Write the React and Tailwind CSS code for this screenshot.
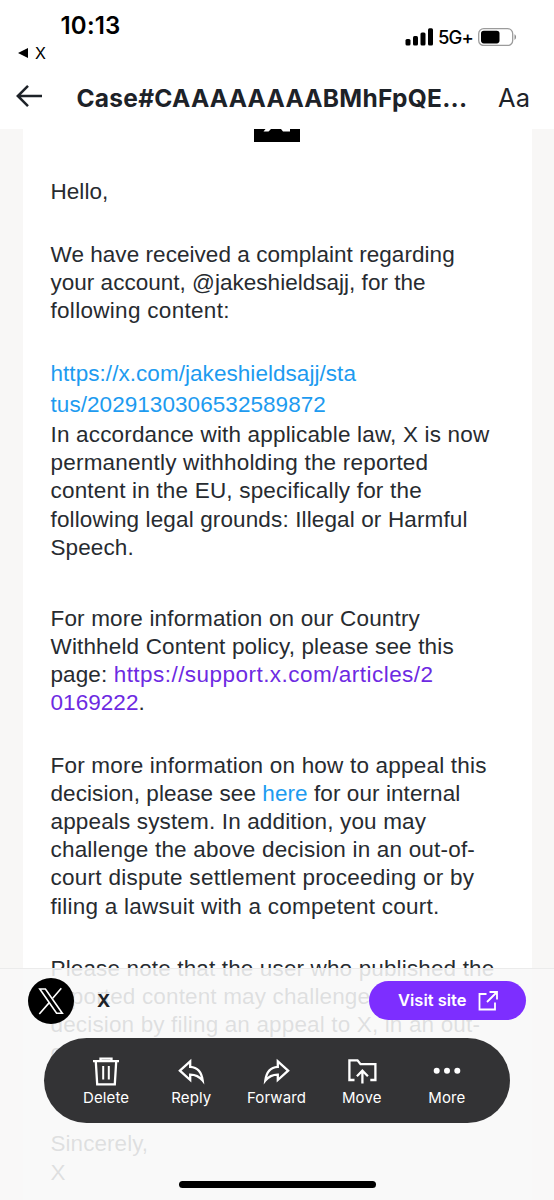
import { clsx } from 'clsx';

const PARAGRAPHS = [
  {
    gap: 'mt-[36px]',
    lines: [{ text: 'Hello,', track: 'tracking-[0.05px]' }],
  },
  {
    gap: 'mt-[34.6px]',
    lines: [
      { text: 'We have received a complaint regarding', track: 'tracking-[0.05px]' },
      { text: 'your account, @jakeshieldsajj, for the', track: 'tracking-[0.02px]' },
      { text: 'following content:', track: 'tracking-[0.3px]' },
    ],
  },
  {
    gap: 'mt-[34px]',
    style: 'leading-[30.5px] text-[#1d9bf0]',
    lines: [
      { text: 'https://x.com/jakeshieldsajj/sta', track: 'tracking-[0.05px]' },
      { text: 'tus/2029130306532589872', track: 'tracking-[0.06px]' },
    ],
  },
  {
    gap: 'mt-[0.6px]',
    lines: [
      { text: 'In accordance with applicable law, X is now', track: 'tracking-[0.17px]' },
      { text: 'permanently withholding the reported', track: 'tracking-[0.21px]' },
      { text: 'content in the EU, specifically for the', track: 'tracking-[0.19px]' },
      { text: 'following legal grounds: Illegal or Harmful', track: 'tracking-[0.13px]' },
      { text: 'Speech.', track: 'tracking-[0.1px]' },
    ],
  },
  {
    gap: 'mt-[42.8px]',
    lines: [
      { text: 'For more information on our Country', track: 'tracking-[0.16px]' },
      { text: 'Withheld Content policy, please see this', track: 'tracking-[0.15px]' },
      {
        text: (
          <>
            page: <a className="tracking-[0.46px] text-[#6d2ae2]">https://support.x.com/articles/2</a>
          </>
        ),
        track: 'tracking-[0.1px]',
      },
      {
        text: (
          <>
            <a className="text-[#6d2ae2]">0169222</a>.
          </>
        ),
        track: 'tracking-[0.05px]',
      },
    ],
  },
  {
    gap: 'mt-[34px]',
    lines: [
      { text: 'For more information on how to appeal this', track: 'tracking-[0.2px]' },
      {
        text: (
          <>
            decision, please see <a className="text-[#1d9bf0]">here</a> for our internal
          </>
        ),
        track: 'tracking-[0.08px]',
      },
      { text: 'appeals system. In addition, you may', track: 'tracking-[0.15px]' },
      { text: 'challenge the above decision in an out-of-', track: 'tracking-[0.19px]' },
      { text: 'court dispute settlement proceeding or by', track: 'tracking-[0.27px]' },
      { text: 'filing a lawsuit with a competent court.', track: 'tracking-[0.25px]' },
    ],
  },
  {
    gap: 'mt-[34px]',
    lines: [
      { text: 'Please note that the user who published the', track: 'tracking-[0.14px]' },
      { text: 'reported content may challenge the above', track: 'tracking-[0.15px]' },
      { text: 'decision by filing an appeal to X, in an out-', track: 'tracking-[0.15px]' },
      { text: 'of-court dispute settlement proceeding or', track: 'tracking-[0.15px]' },
      { text: 'by filing a lawsuit with a competent court.', track: 'tracking-[0.15px]' },
    ],
  },
  {
    gap: 'mt-[34.6px]',
    lines: [
      { text: 'Sincerely,', track: 'tracking-[0.05px]' },
      { text: 'X', track: 'tracking-[0px]' },
    ],
  },
];

const ACTIONS = [
  {
    label: 'Delete',
    icon: (
      <>
        <path d="M3 5.2H29M10.5 4V2.6H21.5V4" />
        <path d="M5.8 5.5 7.2 28.3H24.8L26.2 5.5" />
        <path d="M13.2 10V23.5M18.8 10V23.5" strokeWidth="2" />
      </>
    ),
  },
  {
    label: 'Reply',
    icon: (
      <path d="M4.9 14.7 15.2 5.4V10.8C22 11.2 26.6 15.5 27.7 24.6 24 20 20.3 18.6 15.2 18.6V24Z" />
    ),
  },
  {
    label: 'Forward',
    icon: (
      <path d="M27.1 14.7 16.8 5.4V10.8C10 11.2 5.4 15.5 4.3 24.6 8 20 11.7 18.6 16.8 18.6V24Z" />
    ),
  },
  {
    label: 'Move',
    icon: (
      <>
        <path d="M8.5 24H3.4V4.4H11.5L14.5 8.2H29.4V24H24.3" />
        <path d="M16.4 27.4V15M10.9 20.2 16.4 14.7 21.9 20.2" />
      </>
    ),
  },
  {
    label: 'More',
    icon: (
      <g fill="currentColor" stroke="none">
        <circle cx="5.7" cy="14.7" r="3" />
        <circle cx="16" cy="14.7" r="3" />
        <circle cx="26.3" cy="14.7" r="3" />
      </g>
    ),
  },
];

function StatusBar() {
  return (
    <div className="flex h-[66px] justify-between pl-[17px] pr-[37px] text-black">
      <div className="pt-[10px]">
        <div className="pl-[43.5px] text-[24px] leading-[32px] font-semibold tracking-[0.2px]">10:13</div>
        <div className="flex items-center gap-[6px] pt-px text-[16px] leading-[20px]">
          <svg width="11" height="10" viewBox="0 0 11 10" className="ml-px">
            <path d="M0 5 10 0V10Z" />
          </svg>
          X
        </div>
      </div>
      <div className="mt-[28px] flex h-[18px] items-center">
        <svg width="29" height="18" viewBox="0 0 29 18">
          <rect x="0.5" y="11" width="5" height="6.5" rx="1.5" />
          <rect x="8" y="8" width="5" height="9.5" rx="1.5" />
          <rect x="15.5" y="4.5" width="5" height="13" rx="1.5" />
          <rect x="23" y="0.3" width="5" height="17.2" rx="1.5" />
        </svg>
        <span className="ml-1 w-[40px] pt-[2px] text-[18.5px] font-medium tracking-[-0.9px]">5G+</span>
        <svg width="39" height="18" viewBox="0 0 39 18">
          <rect x="0.7" y="0.7" width="34" height="16.8" rx="5" fill="none" stroke="#9b9b9b" strokeWidth="1.3" />
          <rect x="3" y="2.8" width="18.5" height="12.6" rx="2.8" />
          <path d="M36.5 6.3C38.6 7.5 38.6 10.7 36.5 11.9Z" fill="#8d8d8d" />
        </svg>
      </div>
    </div>
  );
}

function TitleBar() {
  return (
    <div className="flex h-[63px] items-center pl-4 pr-[24px] text-[#1d2228]">
      <svg width="27" height="24" viewBox="0 0 27 24" fill="none" stroke="currentColor" strokeWidth="2.5" className="mb-[3px] shrink-0">
        <path d="M26 12H2M12 1.8 1.8 12 12 22.2" />
      </svg>
      <h1 className="ml-[33.5px] w-[400px] pt-[2px] text-[24.5px] font-bold tracking-[0.25px] whitespace-nowrap">
        Case#CAAAAAAAABMhFpQE...
      </h1>
      <span className="ml-auto pt-px text-[25.5px] leading-8">Aa</span>
    </div>
  );
}

function EmailBody() {
  return (
    <div className="h-[1071px] overflow-hidden bg-[#f8f7f6] px-[22.5px]">
      <div className="h-full bg-white px-7 font-['Liberation_Sans',sans-serif] text-[22.5px] leading-[28.2px] text-[#272b30]">
        <svg width="46" height="13" viewBox="0 0 46 13" className="mx-auto">
          <path d="M0 0H46V13H0Z" fill="#000" />
          <path d="M11.5 0H17L14.5 2.5H9.5ZM27 0H36V2.5H29Z" fill="#fff" />
        </svg>
        {PARAGRAPHS.map((p, i) => (
          <p key={i} className={clsx(p.gap, p.style)}>
            {p.lines.map((line, j) => (
              <span key={j} className={clsx('block whitespace-nowrap', line.track)}>
                {line.text}
              </span>
            ))}
          </p>
        ))}
      </div>
    </div>
  );
}

function SenderRow() {
  return (
    <div className="flex h-[46px] items-center pl-[28px] pr-[28px]">
      <svg width="46" height="46" viewBox="0 0 46 46" fill="none" stroke="#fff" strokeWidth="1.6">
        <circle cx="23" cy="23" r="23" fill="#000" stroke="none" />
        <path d="M11.8 11H17.4L34.3 35.2H28.6Z" />
        <path d="M33.3 10.2 24.7 20.2M11.3 36 21.5 24.4" />
      </svg>
      <span className="ml-[23px] text-[18px] font-bold text-[#1d2228]">X</span>
      <button className="ml-auto flex h-[39.5px] w-[157px] items-center rounded-full bg-[#7d2eff] pl-[29px] text-[16.5px] font-semibold text-white">
        <span className="w-[79px] text-left whitespace-nowrap">Visit site</span>
        <svg width="22" height="22" viewBox="0 0 22 22" fill="none" stroke="currentColor" strokeWidth="1.8">
          <path d="M9.5 4H2.5V19.5H18V12.5" />
          <path d="M12.5 2H20V9.5M20 2 10 12" />
        </svg>
      </button>
    </div>
  );
}

function ActionBar() {
  return (
    <nav className="mx-[44px] mt-[14px] flex h-[85px] rounded-full bg-[#303032]/[0.985] pt-[18px] pr-[20.5px] pl-[19.5px] text-white">
      {ACTIONS.map((a) => (
        <div key={a.label} className="flex flex-1 flex-col items-center">
          <svg width="32" height="30" viewBox="0 0 32 30" fill="none" stroke="currentColor" strokeWidth="2.3">
            {a.icon}
          </svg>
          <span className="mt-[2.5px] text-[15px] leading-5 tracking-[0.1px]">{a.label}</span>
        </div>
      ))}
    </nav>
  );
}

export default function App() {
  return (
    <div className="relative h-[1200px] w-[554px] overflow-hidden bg-white font-['Inter',sans-serif]">
      <StatusBar />
      <TitleBar />
      <EmailBody />
      {/* translucent dock over the message */}
      <div className="absolute inset-x-0 bottom-0 flex h-[232px] flex-col border-t border-[#ebebeb] bg-[#f8f8f8]/[0.88] pt-[8.5px]">
        <SenderRow />
        <ActionBar />
        <div className="mx-auto mt-auto mb-[12px] h-[7px] w-[197px] rounded-full bg-black" />
      </div>
    </div>
  );
}
